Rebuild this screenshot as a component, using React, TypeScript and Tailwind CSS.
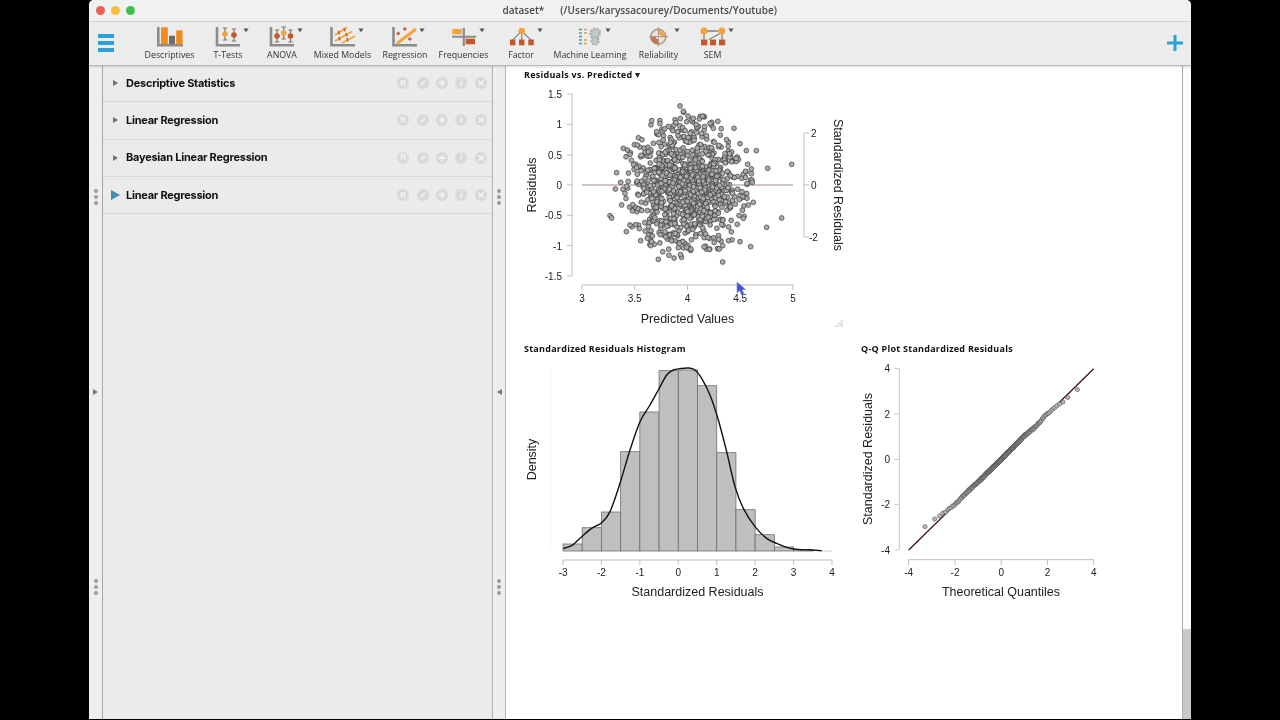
import React from "react";

const ORANGE = "#f3a33a";
const RUST = "#c4582a";
const GRAY = "#8c8c8c";

function rng(seed: number) {
  let s = seed;
  return () => {
    s |= 0; s = (s + 0x6d2b79f5) | 0;
    let t = Math.imul(s ^ (s >>> 15), 1 | s);
    t = (t + Math.imul(t ^ (t >>> 7), 61 | t)) ^ t;
    return ((t ^ (t >>> 14)) >>> 0) / 4294967296;
  };
}

const outliersZ: [number, number][] = [[510,123],[520,139],[425,167],[450,176],[577,154],[672,190],[690,236],[709,257],[739,257],[845,298],[773,310],[320,323],[727,352],[815,459],[770,487],[722,545],[638,591],[445,583],[477,571],[300,452],[305,459],[349,500],[360,480],[316,372],[690,530],[598,553],[340,250],[352,255],[360,268],[382,240],[412,520],[425,530],[700,460],[715,420],[730,412],[724,312],[696,380],[545,165],[600,175],[610,190],[440,200],[430,235],[335,420],[345,385],[530,170],[550,160],[505,548],[508,535]];

function scatterPoints(): [number, number][] {
  const r = rng(23);
  const pts: [number, number][] = [];
  while (pts.length < 980) {
    const u = Math.max(r(), 1e-6), v = r();
    const a = Math.sqrt(-2 * Math.log(u)), b = 2 * Math.PI * v;
    const gx = a * Math.cos(b), gy = a * Math.sin(b);
    if (gx * gx + gy * gy > 5.2) continue;
    const zx = 528 + gx * 88, zy = 365 + gy * 98;
    pts.push([510 + zx / 3, 65 + zy / 3]);
  }
  return pts.concat(outliersZ.map(([x, y]) => [510 + x / 3, 65 + y / 3] as [number, number]));
}

const knots: [number, number][] = [[-3.6, 0.35], [-3.3, 0.32], [-2.7, 0.2], [-2.3, 0.08], [-2, 0], [-1.5, 0.04], [-1, 0], [0, 0], [1, 0.03], [1.5, -0.05], [2, 0.02], [2.7, -0.12], [3.3, -0.26], [3.6, -0.3]];
function offset(q: number) {
  for (let i = 0; i < knots.length - 1; i++) {
    const [a, av] = knots[i], [b, bv] = knots[i + 1];
    if (q >= a && q <= b) return av + ((q - a) / (b - a)) * (bv - av);
  }
  return 0;
}

function qqPoints(): [number, number][] {
  const pts: [number, number][] = [];
  const r = rng(5);
  const n = 260;
  const probit = (p: number) => {
    const t = Math.sqrt(-2 * Math.log(p < 0.5 ? p : 1 - p));
    const z = t - (2.30753 + 0.27061 * t) / (1 + 0.99229 * t + 0.04481 * t * t);
    return p < 0.5 ? -z : z;
  };
  for (let i = 0; i < n; i++) {
    const q = probit((i + 0.5) / n) * 1.14;
    const y = q + offset(q) + (r() - 0.5) * 0.07;
    pts.push([1001.2 + 23.1 * q, 459.3 - 22.7 * y]);
  }
  return pts;
}

const scatter = scatterPoints();
const qq = qqPoints();

const bars = [544, 527.7, 512, 451.7, 412, 370.7, 370, 385.7, 452.7, 509.7, 534.7, 547, 549.5];

const curveZ: [number, number][] = [[160,625],[185,617],[215,590],[245,565],[275,548],[300,515],[330,430],[360,330],[390,245],[420,195],[445,150],[470,105],[490,90],[510,86],[535,84],[555,90],[575,115],[600,165],[625,240],[650,335],[675,440],[700,505],[735,560],[770,595],[800,610],[850,627],[900,630],[935,632]];
function curvePath() {
  const p = curveZ.map(([x, y]) => [510 + x / 3, 340 + y / 3]);
  let d = `M${p[0][0]} ${p[0][1]}`;
  for (let i = 0; i < p.length - 1; i++) {
    const p0 = p[Math.max(0, i - 1)], p1 = p[i], p2 = p[i + 1], p3 = p[Math.min(p.length - 1, i + 2)];
    d += ` C${p1[0] + (p2[0] - p0[0]) / 6} ${p1[1] + (p2[1] - p0[1]) / 6} ${p2[0] - (p3[0] - p1[0]) / 6} ${p2[1] - (p3[1] - p1[1]) / 6} ${p2[0]} ${p2[1]}`;
  }
  return d;
}

const Caret = ({ x }: { x: number }) => <path d={`M${x - 2.6} 28.6h5.2l-2.6 3.6z`} fill="#555" />;
const Axis = ({ x0, x1 }: { x0: number; x1: number }) => (
  <path d={`M${x0} 27V45.3H${x1}`} fill="none" stroke={GRAY} strokeWidth="2.6" />
);
const Whisk = ({ x, c, y = 34 }: { x: number; c: string; y?: number }) => (
  <g>
    <path d={`M${x - 2.2} ${y - 6}h4.4M${x} ${y - 6}v12M${x - 2.2} ${y + 6}h4.4`} stroke="#7d7468" strokeWidth="1.2" fill="none" />
    <circle cx={x} cy={y} r="2.8" fill={c} />
  </g>
);

const icons: { label: string; left: number; w: number; draw: React.ReactNode }[] = [
  { label: "Descriptives", left: 144, w: 51, draw: (
    <g>
      <path d="M158.3 27V45.3H183" fill="none" stroke={GRAY} strokeWidth="2.6" />
      <rect x="161" y="27.3" width="6.8" height="17" fill="#f08c1e" />
      <rect x="169" y="35.7" width="6" height="8.6" fill="#6f6f6f" />
      <rect x="176.2" y="30.3" width="6.4" height="14" fill="#f08c1e" />
    </g>
  ) },
  { label: "T-Tests", left: 195, w: 66, draw: (
    <g><Axis x0={217} x1={240} /><Whisk x={225} c={ORANGE} /><Whisk x={234} c={RUST} y={35} /><Caret x={246} /></g>
  ) },
  { label: "ANOVA", left: 261, w: 42, draw: (
    <g><Axis x0={271} x1={294} /><Whisk x={277} c={RUST} y={36} /><Whisk x={283.7} c={ORANGE} y={33} /><Whisk x={290.5} c={RUST} y={36} /><Caret x={300} /></g>
  ) },
  { label: "Mixed Models", left: 303, w: 79, draw: (
    <g>
      <Axis x0={331.5} x1={355} />
      <path d="M335 35L347 27.5M335 41L352 31.5M342 43L355 36" stroke={ORANGE} strokeWidth="1.8" fill="none" />
      <path d="M338.5 31l1 3.4M344 28l1 3.4M339 37l1 3.4M346 33l1 3.4M347 38l1 3.4" stroke={RUST} strokeWidth="1.5" fill="none" />
      <Caret x={361} />
    </g>
  ) },
  { label: "Regression", left: 382, w: 46, draw: (
    <g>
      <Axis x0={393.5} x1={417} />
      <path d="M397 43.5L416 29" stroke={ORANGE} strokeWidth="3" />
      <path d="M396.5 33.5h3.6M398.3 31.7v3.6M403 29h3.6M404.8 27.2v3.6M408 39h3.6M409.8 37.2v3.6" stroke={RUST} strokeWidth="1.3" />
      <Caret x={422} />
    </g>
  ) },
  { label: "Frequencies", left: 428, w: 71, draw: (
    <g>
      <rect x="452.3" y="29" width="9.4" height="5.3" fill={ORANGE} />
      <path d="M452 36.7H476" stroke={GRAY} strokeWidth="2" />
      <path d="M463.8 28V46" stroke={GRAY} strokeWidth="2.2" />
      <rect x="465.7" y="38.7" width="9.3" height="5.6" fill={RUST} />
      <Caret x={482} />
    </g>
  ) },
  { label: "Factor", left: 499, w: 44, draw: (
    <g>
      <path d="M521.7 31L512.7 40M521.7 31V40M521.7 31L531 40" stroke="#8f8f8f" strokeWidth="1.3" />
      <circle cx="521.7" cy="31" r="3.3" fill={ORANGE} />
      <rect x="510" y="39.5" width="5.4" height="5.8" fill={RUST} />
      <rect x="519" y="39.5" width="5.4" height="5.8" fill={RUST} />
      <rect x="528.3" y="39.5" width="5.5" height="5.8" fill={RUST} />
      <Caret x={540} />
    </g>
  ) },
  { label: "Machine Learning", left: 543, w: 94, draw: (
    <g>
      <path d="M579 29.5h3M579 33h3M579 36.5h3M579 40h3M579 43.5h3" stroke="#4e9aa4" strokeWidth="1.3" />
      <path d="M584 29.5h3M584 33h3M584 40h3M584 43.5h3" stroke="#d99a5a" strokeWidth="1.3" />
      <circle cx="595" cy="33.5" r="4.6" fill="#c4cacb" stroke="#a4adaf" strokeWidth="2.6" strokeDasharray="2 1.2" />
      <circle cx="595" cy="41" r="3.6" fill="#c4cacb" stroke="#a9b1b2" strokeWidth="2.2" strokeDasharray="2 1.2" />
      <circle cx="599.5" cy="31" r="1.6" fill="#b4baba" />
      <Caret x={608} />
    </g>
  ) },
  { label: "Reliability", left: 637, w: 43, draw: (
    <g>
      <circle cx="658.3" cy="36.7" r="7.5" fill="#eee1d4" stroke="#a69a90" strokeWidth="1.4" />
      <path d="M658.3 36.7V29.5A7.2 7.2 0 0 1 665.5 36.7Z" fill="#eda550" />
      <path d="M658.3 36.7H651A7.2 7.2 0 0 0 658.3 44Z" fill={RUST} opacity="0.8" />
      <circle cx="658.3" cy="36.7" r="2.5" fill="#f5f0ea" />
      <path d="M658.3 27V46.5M649 36.7H668" stroke="#9a8f88" strokeWidth="0.9" />
      <Caret x={677} />
    </g>
  ) },
  { label: "SEM", left: 680, w: 65, draw: (
    <g>
      <path d="M707 31H718M704 34V39.5M709 39.5L720 33.5M722 34V39.5" stroke="#808080" strokeWidth="1.3" />
      <circle cx="704" cy="31" r="3.5" fill={ORANGE} />
      <circle cx="721.7" cy="31" r="3.5" fill={ORANGE} />
      <rect x="701" y="39.5" width="6.4" height="5.8" fill={RUST} />
      <rect x="710" y="39.5" width="6" height="5.8" fill={RUST} />
      <rect x="719" y="39.5" width="6.2" height="5.8" fill={RUST} />
      <Caret x={731} />
    </g>
  ) },
];

const ToolItem = ({ label, left, w, draw }: { label: string; left: number; w: number; draw: React.ReactNode }) => (
  <div className="flex flex-col items-center shrink-0" style={{ width: w }}>
    <svg width={w} height={24} viewBox={`${left} 25 ${w} 24`} className="block overflow-visible">{draw}</svg>
    <span className="text-[8.8px] leading-[12px] whitespace-nowrap text-[#333] font-['Open_Sans',sans-serif]">{label}</span>
  </div>
);

const Dots = () => (
  <div className="flex flex-col gap-[2px]">
    <span className="w-[4px] h-[4px] rounded-full bg-[#9a9a9a]" />
    <span className="w-[4px] h-[4px] rounded-full bg-[#9a9a9a]" />
    <span className="w-[4px] h-[4px] rounded-full bg-[#9a9a9a]" />
  </div>
);

const Gutter = ({ dir }: { dir: "l" | "r" }) => (
  <div className="flex flex-col items-center pt-[123px] gap-[183px] w-full">
    <Dots />
    <svg width="5" height="8" viewBox="0 0 5 8" className="block">
      <path d={dir === "r" ? "M0 1L5 4L0 7Z" : "M5 1L0 4L5 7Z"} fill="#777" />
    </svg>
    <Dots />
  </div>
);

const Circle = ({ children }: { children: React.ReactNode }) => (
  <span className="w-[12px] h-[12px] rounded-full bg-[#d9d9d9] flex items-center justify-center text-[8.5px] leading-none font-bold text-[#f3f3f3] font-['Liberation_Sans',sans-serif]">
    {children}
  </span>
);

const RowButtons = () => (
  <div className="flex gap-[7.35px] mr-[5.3px]">
    <Circle>R</Circle>
    <Circle>
      <svg width="8" height="8" viewBox="0 0 7 7"><path d="M1.2 5.8L2 4L5 1L6 2L3 5Z" fill="#f3f3f3" /></svg>
    </Circle>
    <Circle>
      <svg width="8" height="8" viewBox="0 0 7 7"><path d="M3.5 .8V6.2M.8 3.5H6.2" stroke="#f3f3f3" strokeWidth="1.6" /></svg>
    </Circle>
    <Circle>i</Circle>
    <Circle>
      <svg width="8" height="8" viewBox="0 0 7 7"><path d="M1.3 1.3L5.7 5.7M5.7 1.3L1.3 5.7" stroke="#f3f3f3" strokeWidth="1.5" /></svg>
    </Circle>
  </div>
);

const Row = ({ title, active }: { title: string; active?: boolean }) => (
  <div className="h-[37.25px] border-b border-[#d8d8d8] flex items-center">
    <div className="w-[23px] flex justify-center pl-[2px] shrink-0">
      {active ? (
        <svg width="9" height="10" viewBox="0 0 9 10" className="block"><path d="M0 0L9 5L0 10Z" fill="#3f8fb0" /></svg>
      ) : (
        <svg width="5" height="6" viewBox="0 0 5 6" className="block"><path d="M0 0L5 3L0 6Z" fill="#707070" /></svg>
      )}
    </div>
    <span className="text-[11px] font-bold text-[#111] font-['Inter',sans-serif] flex-1 tracking-[-0.25px]">{title}</span>
    <RowButtons />
  </div>
);

const TICK = { fontSize: 10, fill: "#222", textAnchor: "middle" as const };
const LAB = { fontSize: 12.5, fill: "#222", textAnchor: "middle" as const };
const AX = "#bdbdbd";

const Title = ({ children }: { children: React.ReactNode }) => (
  <span className="text-[9px] leading-[12px] font-bold text-[#111] whitespace-nowrap font-['Open_Sans',sans-serif] tracking-[0.25px]">{children}</span>
);

const ScatterPlot = () => (
  <svg width={340} height={255} viewBox="510 82 340 255" className="block font-['Liberation_Sans',sans-serif]">
    <path d="M567 94H572V276H567M572 124.3H567M572 155H567M572 185H567M572 215.3H567M572 245.6H567" fill="none" stroke={AX} />
    {[[94, "1.5"], [124.5, "1"], [155, "0.5"], [185, "0"], [215.5, "-0.5"], [246, "-1"], [276, "-1.5"]].map(([y, t]) => (
      <text key={t as string} x={562} y={(y as number) + 3.5} fontSize={10} fill="#222" textAnchor="end">{t}</text>
    ))}
    <path d="M582 290V285H793V290M634.7 285V290M687.5 285V290M740.2 285V290" fill="none" stroke={AX} />
    {[[582, "3"], [634.7, "3.5"], [687.5, "4"], [740.2, "4.5"], [793, "5"]].map(([x, t]) => (
      <text key={t as string} x={x as number} y={302} {...TICK}>{t}</text>
    ))}
    <path d="M809 133H804V237H809M804 185H809" fill="none" stroke={AX} />
    <text x={811} y={136.5} fontSize={10} fill="#222">2</text>
    <text x={811} y={188.5} fontSize={10} fill="#222">0</text>
    <text x={809} y={240.5} fontSize={10} fill="#222">-2</text>
    <path d="M582 185H793" stroke="#a08a84" strokeWidth="1" />
    {scatter.map(([x, y], i) => (
      <circle key={i} cx={x} cy={y} r={2.4} fill="#ababab" stroke="#3a3a3a" strokeWidth={0.7} />
    ))}
    <text x={687.5} y={322.5} {...LAB}>Predicted Values</text>
    <text {...LAB} transform="translate(536 185) rotate(-90)">Residuals</text>
    <text {...LAB} transform="translate(834 185) rotate(90)">Standardized Residuals</text>
    <path d="M835 327L843 320M838 327L843 323M841 327L843 325.5" stroke="#aaa" strokeWidth="0.7" />
  </svg>
);

const HistPlot = () => {
  const unit = 269 / 7;
  return (
    <svg width={340} height={250} viewBox="510 355 340 250" className="block font-['Liberation_Sans',sans-serif]">
      <path d="M550.5 368V548" stroke="#f2f2f2" />
      {bars.map((top, i) => {
        const x = 563 + (i * unit) / 2;
        return <rect key={i} x={x} y={top} width={unit / 2} height={551 - top} fill="#bfbfbf" stroke="#6e6e6e" strokeWidth="0.8" />;
      })}
      <path d="M818 551H832" stroke="#c8c8c8" />
      <path d={curvePath()} fill="none" stroke="#111" strokeWidth="1.4" />
      <path d={`M563 565V560H832V565 ${[1, 2, 3, 4, 5, 6].map((i) => `M${563 + i * unit} 560V565`).join(" ")}`} fill="none" stroke={AX} />
      {["-3", "-2", "-1", "0", "1", "2", "3", "4"].map((t, i) => (
        <text key={t} x={563 + i * unit} y={576} {...TICK}>{t}</text>
      ))}
      <text x={697.5} y={596} {...LAB}>Standardized Residuals</text>
      <text {...LAB} transform="translate(536 459.5) rotate(-90)">Density</text>
    </svg>
  );
};

const QQPlot = () => (
  <svg width={330} height={250} viewBox="850 355 330 250" className="block font-['Liberation_Sans',sans-serif]">
    <path d="M894.5 368.7H899.3V550H894.5M899.3 414H894.5M899.3 459.3H894.5M899.3 504.6H894.5" fill="none" stroke="#c8c8c8" />
    {[[368.7, "4"], [414, "2"], [459.3, "0"], [504.6, "-2"], [550, "-4"]].map(([y, t]) => (
      <text key={t as string} x={890} y={(y as number) + 3.5} fontSize={10} fill="#222" textAnchor="end">{t}</text>
    ))}
    <path d="M908.7 565V559.7H1093.7V565M955 559.7V565M1001.2 559.7V565M1047.5 559.7V565" fill="none" stroke={AX} />
    {[[908.7, "-4"], [955, "-2"], [1001.2, "0"], [1047.5, "2"], [1093.7, "4"]].map(([x, t]) => (
      <text key={t as string} x={x as number} y={576} {...TICK}>{t}</text>
    ))}
    <path d="M908.7 550L1093.7 368.7" stroke="#3a0a0a" strokeWidth="1.2" />
    {qq.map(([x, y], i) => (
      <circle key={i} cx={x} cy={y} r={2.1} fill="#b8b8b8" stroke="#484848" strokeWidth={0.55} />
    ))}
    <text x={1001} y={596} {...LAB}>Theoretical Quantiles</text>
    <text {...LAB} transform="translate(872 459) rotate(-90)">Standardized Residuals</text>
  </svg>
);

export default function App() {
  return (
    <div className="w-[1280px] h-[720px] bg-black overflow-hidden pl-[89px]">
      <div className="w-[1102px] h-[719px] flex flex-col bg-white rounded-t-[5px] overflow-hidden relative blur-[0.4px]">
        <div className="h-[22px] shrink-0 bg-[#f1f1f1] border-b border-[#d2d2d2] flex items-center pl-[6.5px] pb-[1px]">
          <span className="w-[9px] h-[9px] rounded-full bg-[#ee5f57]" />
          <span className="w-[9px] h-[9px] rounded-full bg-[#f6bd3c] ml-[6px]" />
          <span className="w-[9px] h-[9px] rounded-full bg-[#3cc04a] ml-[6px]" />
          <span className="ml-[368px] text-[10px] font-semibold text-[#4a4a4a] font-['Open_Sans',sans-serif]">dataset*</span>
          <span className="ml-[16px] text-[10px] tracking-[0.05px] font-semibold text-[#4a4a4a] font-['Open_Sans',sans-serif]">(/Users/karyssacourey/Documents/Youtube)</span>
        </div>
        <div className="h-[44px] shrink-0 bg-[#ececec] border-b border-[#b8b8b8] flex items-start pl-[9px] pt-[3px] relative z-10 shadow-[0_1px_2px_rgba(0,0,0,0.15)]">
          <div className="flex flex-col gap-[3.5px] w-[16px] mt-[9px] shrink-0">
            <span className="h-[3.5px] bg-[#2f9fd9]" />
            <span className="h-[3.5px] bg-[#2f9fd9]" />
            <span className="h-[3.5px] bg-[#2f9fd9]" />
          </div>
          <div className="flex ml-[30px]">
            {icons.map((it) => <ToolItem key={it.label} {...it} />)}
          </div>
          <svg width="16" height="16" viewBox="0 0 16 16" className="block ml-auto mr-[8px] mt-[10px]">
            <path d="M8 0V16M0 8H16" stroke="#2f9fd9" strokeWidth="3" />
          </svg>
        </div>
        <div className="flex-1 flex min-h-0">
          <div className="w-[14px] shrink-0 bg-[#eeeeee] border-r border-[#a8a8a8]"><Gutter dir="r" /></div>
          <div className="w-[390px] shrink-0 bg-[#ebebeb] border-r border-[#b0b0b0] -mt-[1px]">
            <Row title="Descriptive Statistics" />
            <Row title="Linear Regression" />
            <Row title="Bayesian Linear Regression" />
            <Row title="Linear Regression" active />
          </div>
          <div className="w-[13px] shrink-0 bg-[#eeeeee] border-r border-[#b5b5b5]"><Gutter dir="l" /></div>
          <div className="w-[677px] shrink-0 bg-white border-r border-[#ababab] flex flex-col pl-[4px] pt-[4px] overflow-hidden">
            <div className="pl-[14px] flex items-center gap-[3px] h-[12px] -mt-[1px] mb-[1px]">
              <Title>Residuals vs. Predicted</Title>
              <svg width="5" height="5" viewBox="0 0 5 5" className="block"><path d="M0 0H5L2.5 5Z" fill="#222" /></svg>
            </div>
            <ScatterPlot />
            <div className="flex mt-[5.5px]">
              <div className="w-[340px] shrink-0">
                <div className="pl-[14px] h-[12px] flex items-center"><Title>Standardized Residuals Histogram</Title></div>
                <HistPlot />
              </div>
              <div className="shrink-0">
                <div className="pl-[11px] h-[12px] flex items-center"><Title>Q-Q Plot Standardized Residuals</Title></div>
                <QQPlot />
              </div>
            </div>
          </div>
          <div className="flex-1 bg-[#fbfbfb] flex flex-col">
            <div className="flex-1" />
            <div className="h-[90px] bg-[#c9c9c9]" />
          </div>
        </div>
        <svg width="10" height="15" viewBox="0 0 10 15" className="absolute left-[647px] top-[281px] z-20">
          <path d="M1 1L1 12L3.8 9.6L5.6 14L8 13L6 8.8L9.6 8.6Z" fill="#3f54d6" stroke="#7c8ae0" strokeWidth="0.6" />
        </svg>
      </div>
    </div>
  );
}
